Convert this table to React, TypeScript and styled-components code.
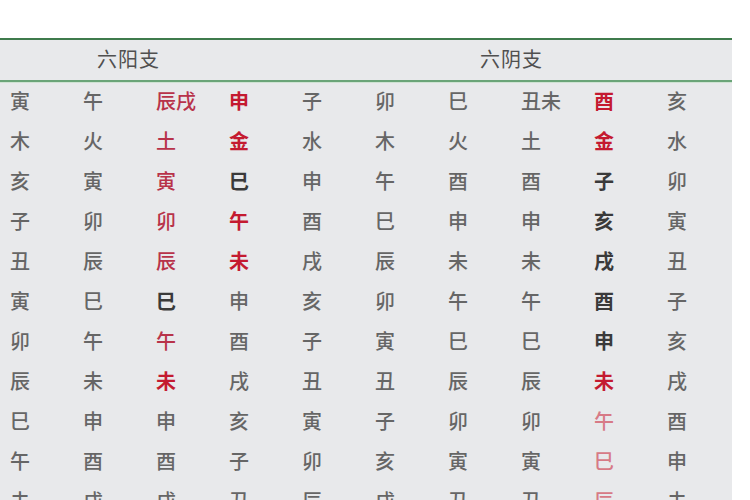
import React from 'react';
import styled, { createGlobalStyle } from 'styled-components';

const GlobalStyle = createGlobalStyle`
  html, body {
    margin: 0;
    padding: 0;
    background: #ffffff;
  }
  body {
    font-family: "Noto Sans CJK SC", "Noto Sans", sans-serif;
    overflow: hidden;
  }
`;

type Tone = 'gray' | 'red' | 'strong' | 'dark' | 'pink';

const Page = styled.div`
  width: 750px;
  height: 500px;
  padding-top: 38px;
  box-sizing: border-box;
  overflow: hidden;
`;

const Table = styled.div`
  width: 732px;
  background-color: #e8e9eb;
  border-top: 2px solid #3f7b4c;
`;

const HeaderRow = styled.div`
  display: flex;
  height: 40px;
  align-items: center;
  border-bottom: 2px solid #6aa478;
  box-shadow: 0 1px 0 #cfe3d3;
`;

const HeaderCell = styled.div<{ $width: number; $indent: number }>`
  width: ${p => p.$width}px;
  padding-left: ${p => p.$indent}px;
  padding-bottom: 4px;
  box-sizing: border-box;
  font-size: 20px;
  font-weight: 400;
  color: #505050;
  letter-spacing: 1px;
`;

const Row = styled.div`
  display: grid;
  grid-template-columns: repeat(10, 73px);
  height: 40px;
  align-items: center;
`;

const toneColor: Record<Tone, string> = {
  gray: '#666666',
  red: '#b8334a',
  strong: '#c41a30',
  dark: '#3a3a3a',
  pink: '#d77a86'
};

const Cell = styled.div<{ $tone: Tone }>`
  padding-left: 10px;
  padding-bottom: 3px;
  font-size: 20px;
  line-height: 1;
  white-space: nowrap;
  color: ${p => toneColor[p.$tone]};
  font-weight: ${p => (p.$tone === 'strong' || p.$tone === 'dark' ? 700 : 500)};
`;

// each cell: text, with an optional tone after a colon
const rows: string[][] = [
  ['寅', '午', '辰戌:red', '申:strong', '子', '卯', '巳', '丑未', '酉:strong', '亥'],
  ['木', '火', '土:red', '金:strong', '水', '木', '火', '土', '金:strong', '水'],
  ['亥', '寅', '寅:red', '巳:dark', '申', '午', '酉', '酉', '子:dark', '卯'],
  ['子', '卯', '卯:red', '午:strong', '酉', '巳', '申', '申', '亥:dark', '寅'],
  ['丑', '辰', '辰:red', '未:strong', '戌', '辰', '未', '未', '戌:dark', '丑'],
  ['寅', '巳', '巳:dark', '申', '亥', '卯', '午', '午', '酉:dark', '子'],
  ['卯', '午', '午:red', '酉', '子', '寅', '巳', '巳', '申:dark', '亥'],
  ['辰', '未', '未:strong', '戌', '丑', '丑', '辰', '辰', '未:strong', '戌'],
  ['巳', '申', '申', '亥', '寅', '子', '卯', '卯', '午:pink', '酉'],
  ['午', '酉', '酉', '子', '卯', '亥', '寅', '寅', '巳:pink', '申'],
  ['未', '戌', '戌', '丑', '辰', '戌', '丑', '丑', '辰:pink', '未']
];

const parse = (v: string): [string, Tone] => {
  const [text, tone] = v.split(':');
  return [text, (tone as Tone) || 'gray'];
};

export default function App() {
  return (
    <>
      <GlobalStyle />
      <Page>
        <Table>
          <HeaderRow>
            <HeaderCell $width={365} $indent={97}>六阳支</HeaderCell>
            <HeaderCell $width={367} $indent={115}>六阴支</HeaderCell>
          </HeaderRow>
          {rows.map((r, i) => (
            <Row key={i}>
              {r.map((v, j) => {
                const [text, tone] = parse(v);
                return (
                  <Cell key={j} $tone={tone}>
                    {text}
                  </Cell>
                );
              })}
            </Row>
          ))}
        </Table>
      </Page>
    </>
  );
}
